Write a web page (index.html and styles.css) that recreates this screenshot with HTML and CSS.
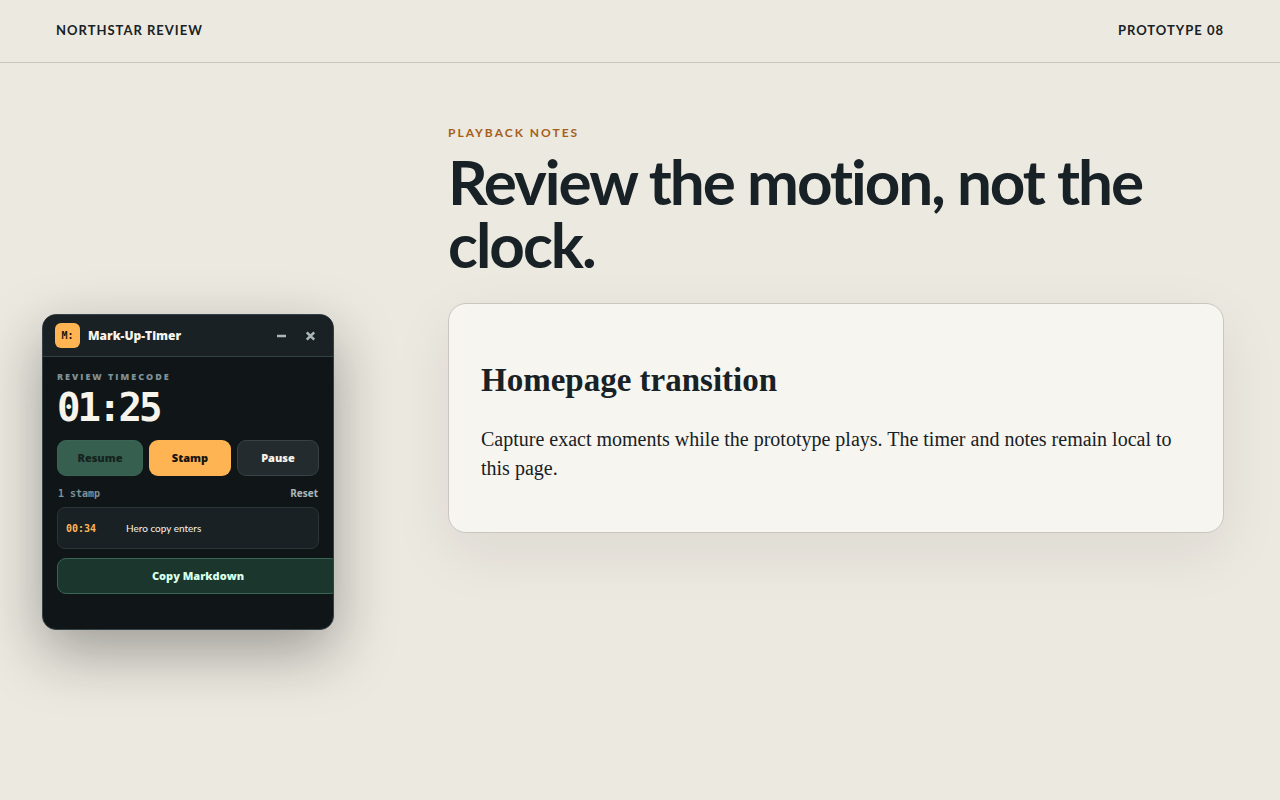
FILE: index.html
```html
<!DOCTYPE html>
<html lang="en">
<head>
    <meta charset="UTF-8">
    <meta name="viewport" content="width=device-width, initial-scale=1.0">
    <title>Northstar Review</title>
    <link rel="stylesheet" href="styles.css">
</head>
<body>
    <header class="site-header">
        <span>NORTHSTAR REVIEW</span>
        <span>PROTOTYPE 08</span>
    </header>

    <main class="layout">
        <aside class="timer" aria-label="Mark-Up-Timer">
            <div class="timer-bar">
                <span class="timer-logo">M:</span>
                <strong class="timer-title">Mark-Up-Timer</strong>
                <button class="icon-button" type="button" aria-label="Minimize">
                    <svg width="11" height="11" viewBox="0 0 11 11"><path d="M1 6h9" /></svg>
                </button>
                <button class="icon-button" type="button" aria-label="Close">
                    <svg width="11" height="11" viewBox="0 0 11 11"><path d="M1.8 2.3l7.4 7.4M9.2 2.3l-7.4 7.4" /></svg>
                </button>
            </div>
            <div class="timer-body">
                <div class="timer-label">REVIEW TIMECODE</div>
                <div class="timer-clock">01:25</div>
                <div class="timer-controls">
                    <button class="btn btn-resume" type="button" disabled>Resume</button>
                    <button class="btn btn-stamp" type="button">Stamp</button>
                    <button class="btn btn-pause" type="button">Pause</button>
                </div>
                <div class="stamp-head">
                    <span class="stamp-count">1 stamp</span>
                    <button class="reset" type="button">Reset</button>
                </div>
                <ul class="stamps">
                    <li class="stamp">
                        <time class="stamp-time">00:34</time>
                        <input class="stamp-note" type="text" aria-label="Note for 00:34" value="Hero copy enters">
                    </li>
                </ul>
                <button class="btn btn-copy" type="button">Copy Markdown</button>
            </div>
        </aside>

        <section class="content">
            <p class="eyebrow">PLAYBACK NOTES</p>
            <h1>Review the motion, not the clock.</h1>
            <article class="card">
                <h2>Homepage transition</h2>
                <p>Capture exact moments while the prototype plays. The timer and notes remain local to this page.</p>
            </article>
        </section>
    </main>
</body>
</html>
```

FILE: styles.css
```css
* {
    box-sizing: border-box;
}
body {
    margin: 0;
    min-height: 100vh;
    background: #ece9e0;
    color: #182125;
    font-family: Lato, "Liberation Sans", sans-serif;
}
button,
input {
    font-family: inherit;
}
.site-header {
    display: flex;
    justify-content: space-between;
    padding: 20px 56px 22px;
    border-bottom: 1px solid #c8c6bf;
    font-size: 13px;
    font-weight: 700;
    line-height: 20px;
    letter-spacing: 1px;
}
.layout {
    display: grid;
    grid-template-columns: 292px minmax(0, 1fr);
    column-gap: 114px;
    align-items: start;
    padding: 60px 56px 60px 42px;
}

/* timer widget */
.timer {
    margin-top: 191px;
    overflow: hidden;
    background: #101618;
    border: 1px solid #344146;
    border-radius: 14px;
    box-shadow: 0 22px 60px rgba(16, 16, 19, 0.36);
    color: #f7f4ec;
}
.timer-bar {
    display: flex;
    align-items: center;
    gap: 8px;
    height: 42px;
    padding: 0 12px;
    background: #1a2124;
    border-bottom: 1px solid #344146;
}
.timer-logo {
    display: grid;
    place-items: center;
    width: 25px;
    height: 25px;
    border-radius: 6px;
    background: #ffb454;
    color: #17130c;
    font: bold 10px "DejaVu Sans Mono", monospace;
}
.timer-title {
    flex: 1;
    font-family: "Open Sans", sans-serif;
    font-size: 12px;
    font-weight: 800;
}
.icon-button {
    display: grid;
    place-items: center;
    width: 21px;
    height: 24px;
    padding: 0;
    border: 0;
    background: none;
}
.icon-button svg {
    stroke: #a9b6ba;
    stroke-width: 2.6;
    fill: none;
}
.timer-body {
    padding: 14px 14px 35px;
}
.timer-label {
    color: #7e9197;
    font-family: "Open Sans", sans-serif;
    font-size: 9px;
    font-weight: 800;
    line-height: 12px;
    letter-spacing: 2px;
}
.timer-clock {
    font: bold 39px/50px "DejaVu Sans Mono", monospace;
    letter-spacing: -3px;
}
.timer-controls {
    display: grid;
    grid-template-columns: 86fr 82fr 82fr;
    gap: 6px;
    margin-top: 7px;
}
.btn {
    height: 36px;
    padding: 0 0 1px;
    border: 1px solid transparent;
    border-radius: 9px;
    font-family: "Open Sans", sans-serif;
    font-size: 11px;
    font-weight: 800;
}
.btn-resume {
    background: #365f4f;
    border-color: #3a6554;
    color: #14231e;
}
.btn-stamp {
    background: #ffb454;
    color: #17130c;
}
.btn-pause {
    background: #232b2e;
    border-color: #364246;
    color: #f7f4ec;
}
.stamp-head {
    display: flex;
    justify-content: space-between;
    align-items: center;
    height: 31px;
    padding: 3px 1px 0;
}
.stamp-count {
    color: #7e9197;
    font: bold 10px "DejaVu Sans Mono", monospace;
}
.reset {
    padding: 0;
    border: 0;
    background: none;
    color: #a9b6ba;
    font-family: "Open Sans", sans-serif;
    font-size: 10px;
    font-weight: 700;
}
.stamps {
    margin: 0;
    padding: 0;
    list-style: none;
}
.stamp {
    display: grid;
    grid-template-columns: 52px 1fr;
    column-gap: 8px;
    align-items: center;
    height: 42px;
    padding: 0 8px;
    background: #1a2124;
    border: 1px solid #2b363a;
    border-radius: 8px;
}
.stamp-time {
    color: #ffb454;
    font: bold 10px "DejaVu Sans Mono", monospace;
}
.stamp-note {
    width: 100%;
    padding: 0;
    border: 0;
    background: none;
    color: #f7f4ec;
    font-size: 10px;
}
.btn-copy {
    width: calc(100% + 20px);
    margin-top: 9px;
    background: #1a362d;
    border-color: #3a6554;
    color: #d8ffea;
}

/* page content */
.eyebrow {
    margin: 0;
    color: #a65e1b;
    font-size: 12px;
    font-weight: 700;
    line-height: 20px;
    letter-spacing: 2px;
}
h1 {
    margin: 7px 0 27px;
    font-size: 62px;
    font-weight: 700;
    line-height: 63px;
    letter-spacing: -2px;
}
.card {
    padding: 57px 32px 49px;
    background: #f7f5ef;
    border: 1px solid #c8c6bf;
    border-radius: 18px;
    box-shadow: 0 20px 60px rgba(33, 30, 37, 0.08);
    font-family: "Liberation Serif", serif;
}
.card h2 {
    margin: 0 0 26px;
    font-size: 33px;
    line-height: 38px;
}
.card p {
    margin: 0;
    font-size: 20px;
    line-height: 29px;
}
```
